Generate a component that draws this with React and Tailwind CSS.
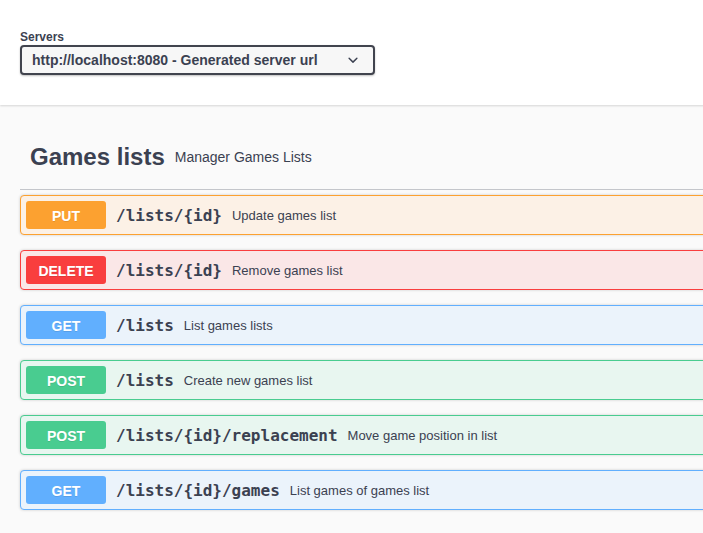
const ops = [
  { m: "PUT", path: "/lists/{id}", desc: "Update games list", c: "border-[#fca130] bg-[#fcf1e6]", b: "bg-[#fca130]" },
  { m: "DELETE", path: "/lists/{id}", desc: "Remove games list", c: "border-[#f93e3e] bg-[#fae7e7]", b: "bg-[#f93e3e]" },
  { m: "GET", path: "/lists", desc: "List games lists", c: "border-[#61affe] bg-[#ebf3fb]", b: "bg-[#61affe]" },
  { m: "POST", path: "/lists", desc: "Create new games list", c: "border-[#49cc90] bg-[#e8f6f0]", b: "bg-[#49cc90]" },
  { m: "POST", path: "/lists/{id}/replacement", desc: "Move game position in list", c: "border-[#49cc90] bg-[#e8f6f0]", b: "bg-[#49cc90]" },
  { m: "GET", path: "/lists/{id}/games", desc: "List games of games list", c: "border-[#61affe] bg-[#ebf3fb]", b: "bg-[#61affe]" },
];

export default function App() {
  return (
    <div className="w-[703px] h-[533px] overflow-hidden bg-[#fafafa] text-[#3b4151] font-['Liberation_Sans',Arial,sans-serif]">
      <div className="w-[1460px]">
        <div className="bg-white pt-[30px] pb-[30px] shadow-[0_1px_2px_0_rgba(0,0,0,0.15)]">
          <div className="px-5">
            <div className="text-[12px] font-bold leading-[14px]">Servers</div>
            <div className="mt-px relative w-[355px] h-[30px] border-2 border-[#41444e] rounded-[4px] bg-[#f7f7f7] shadow-[0_1px_2px_0_rgba(0,0,0,0.25)] flex items-center pl-[10px]">
              <span className="text-[14px] font-bold leading-none">http://localhost:8080 - Generated server url</span>
              <svg className="absolute right-[10px] top-1/2 -translate-y-1/2" width="20" height="20" viewBox="0 0 20 20">
                <path fill="#3b4151" d="M13.418 7.859a.695.695 0 01.978 0 .68.68 0 010 .969l-3.908 3.83a.697.697 0 01-.979 0l-3.908-3.83a.68.68 0 010-.969.695.695 0 01.978 0L10 11l3.418-3.141z" />
              </svg>
            </div>
          </div>
        </div>
        <div className="px-5 mt-5">
          <div className="h-[65px] flex items-center pl-[10px] border-b border-[#c4c6cb]">
            <span className="text-[24px] font-bold">Games lists</span>
            <span className="text-[14px] ml-[10px]">Manager Games Lists</span>
          </div>
          <div className="mt-[5px] flex flex-col gap-[15px]">
            {ops.map((o, i) => (
              <div key={i} className={`h-[40px] border rounded-[4px] p-[5px] flex items-center shadow-[0_0_3px_rgba(0,0,0,0.19)] ${o.c}`}>
                <div className={`w-[80px] h-[28px] pt-[2px] rounded-[3px] flex items-center justify-center text-white text-[14px] font-bold [text-shadow:0_1px_0_rgba(0,0,0,0.1)] ${o.b}`}>{o.m}</div>
                <span className="mt-[2px] px-[10px] text-[16px] font-bold font-['DejaVu_Sans_Mono',monospace]">{o.path}</span>
                <span className="mt-[2px] text-[13px]">{o.desc}</span>
              </div>
            ))}
          </div>
        </div>
      </div>
    </div>
  );
}
